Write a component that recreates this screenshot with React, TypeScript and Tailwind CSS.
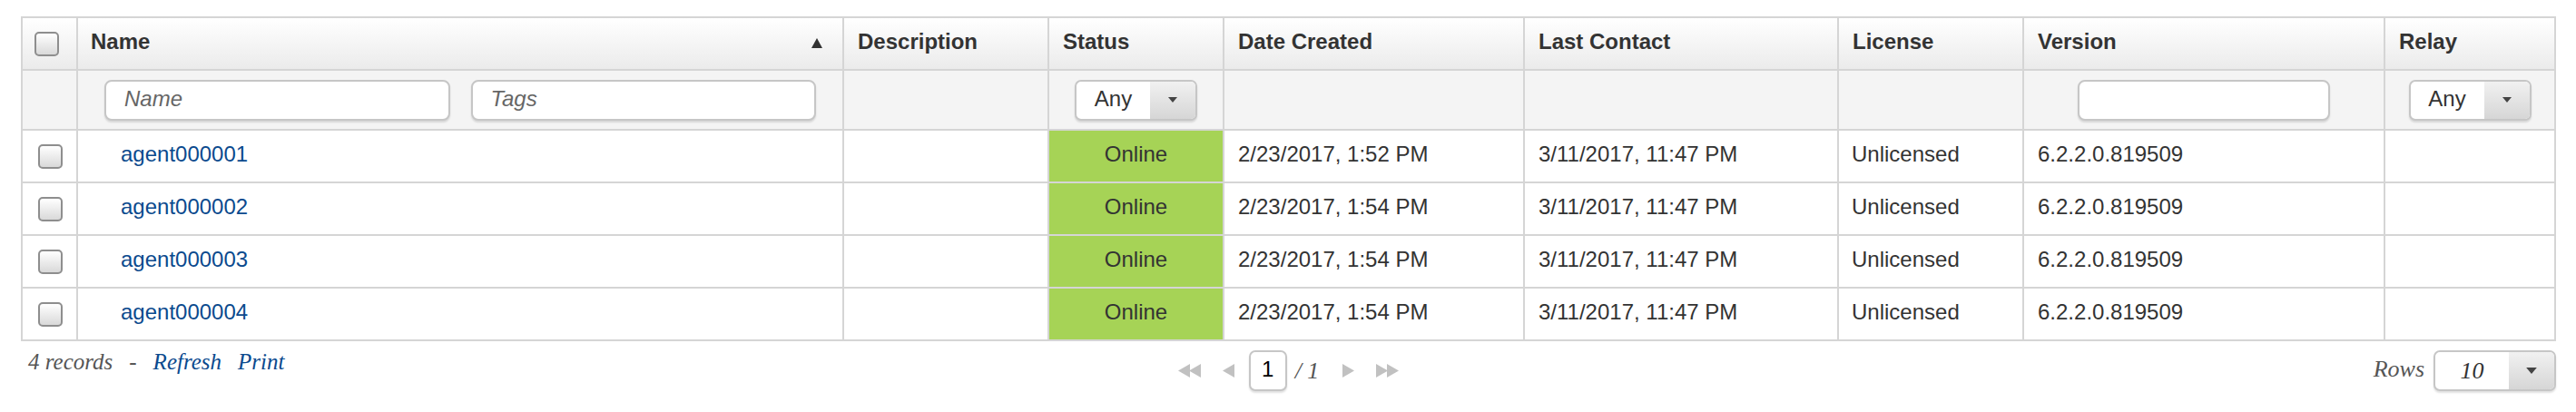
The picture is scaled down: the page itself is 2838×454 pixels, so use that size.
import React from "react";

const COLS =
  "grid grid-cols-[59px_844px_226px_193px_331px_346px_204px_398px_188px]";

const agents = [
  { name: "agent000001", created: "2/23/2017, 1:52 PM" },
  { name: "agent000002", created: "2/23/2017, 1:54 PM" },
  { name: "agent000003", created: "2/23/2017, 1:54 PM" },
  { name: "agent000004", created: "2/23/2017, 1:54 PM" },
];

function Checkbox({ className = "" }: { className?: string }) {
  return (
    <div
      className={`h-[27px] w-[27px] rounded-[5px] border-2 border-[#8e8e8e] bg-linear-to-b from-white to-[#d9d9d9] ${className}`}
    />
  );
}

function Caret({ className = "" }: { className?: string }) {
  return (
    <svg viewBox="0 0 10 6" className={className}>
      <path d="M0 0h10L5 6z" fill="currentColor" />
    </svg>
  );
}

function SelectBox({ label, serif = false }: { label: string; serif?: boolean }) {
  return (
    <div className="flex h-[45px] overflow-hidden rounded-[7px] border-2 border-[#c6c6c6] bg-white shadow-[0_2px_2px_rgba(0,0,0,0.12)]">
      <div
        className={`flex w-[81px] items-center justify-center text-[#333] ${
          serif
            ? "font-['Liberation_Serif',serif] text-[26px] italic"
            : "pb-[3px] text-[24px]"
        }`}
      >
        {label}
      </div>
      <div className="flex w-[50px] items-center justify-center bg-linear-to-b from-[#f1f1f1] to-[#d6d6d6] text-[#444]">
        <Caret className={serif ? "h-[7px] w-[14px]" : "h-[6px] w-[10px]"} />
      </div>
    </div>
  );
}

function Tri({ dir, className = "" }: { dir: "l" | "r"; className?: string }) {
  return (
    <svg viewBox="0 0 13 15" className={`h-[15px] w-[13px] ${className}`}>
      <path d={dir === "l" ? "M13 0v15L0 7.5z" : "M0 0v15l13-7.5z"} fill="#c1c1c1" />
    </svg>
  );
}

export default function App() {
  return (
    <div className="min-h-[454px] bg-white px-[23px] pt-[18px] font-['Liberation_Sans',Arial,sans-serif] text-[24px] text-[#333]">
      <div className="w-[2793px] border-2 border-[#d5d5d5]">
        {/* header */}
        <div className={`${COLS} h-[56px] bg-linear-to-b from-white to-[#ebebeb] font-bold`}>
          <div className="flex items-center pl-[13px]">
            <Checkbox />
          </div>
          <div className="flex items-center justify-between border-l-2 border-[#d5d5d5] pb-[5px] pl-[14px] pr-[22px]">
            <span>Name</span>
            <svg viewBox="0 0 12 11" className="mt-[4px] h-[11px] w-[12px]">
              <path d="M6 0l6 11H0z" fill="#333" />
            </svg>
          </div>
          {["Description", "Status", "Date Created", "Last Contact", "License", "Version", "Relay"].map(
            (h) => (
              <div
                key={h}
                className="flex items-center border-l-2 border-[#d5d5d5] px-[15px] pb-[5px]"
              >
                {h}
              </div>
            ),
          )}
        </div>

        {/* filters */}
        <div className={`${COLS} h-[66px] border-t-2 border-[#d5d5d5] bg-[#f4f4f4]`}>
          <div />
          <div className="flex items-center gap-[23px] border-l-2 border-[#d5d5d5] px-[29px]">
            {["Name", "Tags"].map((p) => (
              <input
                key={p}
                placeholder={p}
                className="h-[45px] min-w-0 flex-1 rounded-[8px] border-2 border-[#c6c6c6] bg-white px-[20px] pb-[3px] text-[24px] italic shadow-[0_2px_2px_rgba(0,0,0,0.12)] outline-none placeholder:text-[#666]"
              />
            ))}
          </div>
          <div className="border-l-2 border-[#d5d5d5]" />
          <div className="flex items-center justify-center border-l-2 border-[#d5d5d5]">
            <SelectBox label="Any" />
          </div>
          <div className="border-l-2 border-[#d5d5d5]" />
          <div className="border-l-2 border-[#d5d5d5]" />
          <div className="border-l-2 border-[#d5d5d5]" />
          <div className="flex items-center justify-center border-l-2 border-[#d5d5d5]">
            <input className="h-[45px] w-[278px] rounded-[8px] border-2 border-[#c6c6c6] bg-white shadow-[0_2px_2px_rgba(0,0,0,0.12)] outline-none" />
          </div>
          <div className="flex items-center justify-center border-l-2 border-[#d5d5d5]">
            <SelectBox label="Any" />
          </div>
        </div>

        {/* rows */}
        {agents.map((a) => (
          <div
            key={a.name}
            className={`${COLS} h-[58px] border-t-2 border-[#d5d5d5] bg-white`}
          >
            <div className="flex items-center pl-[17px]">
              <Checkbox />
            </div>
            <div className="flex items-center border-l-2 border-[#d5d5d5] pb-[4px] pl-[47px]">
              <a href="#" className="text-[#0b4a8e]">
                {a.name}
              </a>
            </div>
            <div className="border-l-2 border-[#d5d5d5]" />
            <div className="flex items-center justify-center border-l-2 border-[#d5d5d5] bg-[#a6d356] pb-[4px]">
              Online
            </div>
            <div className="flex items-center border-l-2 border-[#d5d5d5] px-[15px] pb-[4px]">
              {a.created}
            </div>
            <div className="flex items-center border-l-2 border-[#d5d5d5] px-[15px] pb-[4px]">
              3/11/2017, 11:47 PM
            </div>
            <div className="flex items-center border-l-2 border-[#d5d5d5] px-[14px] pb-[4px]">
              Unlicensed
            </div>
            <div className="flex items-center border-l-2 border-[#d5d5d5] px-[15px] pb-[4px]">
              6.2.2.0.819509
            </div>
            <div className="border-l-2 border-[#d5d5d5]" />
          </div>
        ))}
      </div>

      {/* footer */}
      <div className="mt-[10px] grid w-[2793px] grid-cols-3 items-center">
        <div className="flex items-center gap-[18px] self-start pl-[8px] font-['Liberation_Serif',serif] text-[25px] leading-none italic text-[#555]">
          <span>4 records</span>
          <span>-</span>
          <span className="flex gap-[18px] text-[#0b4a8e]">
            <a href="#">Refresh</a>
            <a href="#">Print</a>
          </span>
        </div>
        <div className="flex items-center justify-center">
          <span className="flex">
            <Tri dir="l" />
            <Tri dir="l" className="-ml-[1px]" />
          </span>
          <Tri dir="l" className="ml-[24px]" />
          <div className="ml-[16px] flex h-[45px] w-[42px] items-center justify-center rounded-[7px] border-2 border-[#c6c6c6] bg-white pb-[3px] text-[24px] text-black shadow-[0_2px_2px_rgba(0,0,0,0.12)]">
            1
          </div>
          <span className="ml-[9px] font-['Liberation_Serif',serif] text-[26px] italic text-[#555]">
            / 1
          </span>
          <Tri dir="r" className="ml-[26px]" />
          <span className="ml-[24px] flex">
            <Tri dir="r" />
            <Tri dir="r" className="-ml-[1px]" />
          </span>
        </div>
        <div className="flex items-center justify-end gap-[10px]">
          <span className="pb-[5px] font-['Liberation_Serif',serif] text-[26px] italic text-[#555]">
            Rows
          </span>
          <SelectBox label="10" serif />
        </div>
      </div>
    </div>
  );
}
